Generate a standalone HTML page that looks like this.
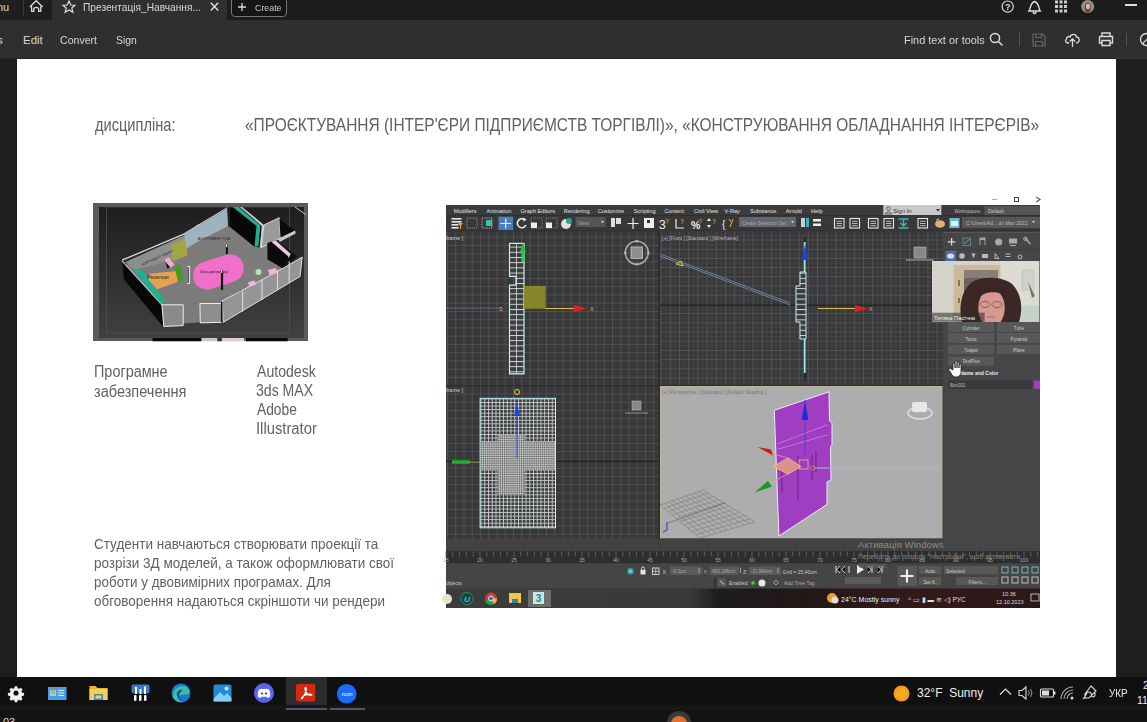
<!DOCTYPE html>
<html><head><meta charset="utf-8">
<style>
*{margin:0;padding:0;box-sizing:border-box}
html,body{width:1147px;height:722px;overflow:hidden;background:#1e1e1e;font-family:"Liberation Sans",sans-serif}
.a{position:absolute}
.t{position:absolute;color:#616161;white-space:nowrap;transform-origin:0 0}
.ct{position:absolute;color:#d6d6d6;white-space:nowrap;font-size:11.5px;line-height:12px}
svg{position:absolute;overflow:visible}

</style></head><body>
<div class="a" style="left:0;top:0;width:1147px;height:20px;background:#1c1c1c"></div>
<div class="a" style="left:0;top:0;width:52px;height:20px;background:#1f1f1f"></div>
<div class="a" style="left:22.5px;top:0;width:1px;height:16px;background:#383838"></div>
<div class="a" style="left:52px;top:0;width:175px;height:20px;background:#2f2f2f"></div>
<div class="a" style="left:0;top:20px;width:1147px;height:39px;background:#2f2f2f"></div><div class="a" style="left:0;top:58px;width:1116px;height:1px;background:#262626"></div><div class="a" style="left:1116px;top:58px;width:31px;height:1px;background:#3a3a3a"></div>
<div class="a" style="left:17px;top:59px;width:1099px;height:618px;background:#fff"></div>
<div class="ct" style="left:-3px;top:0.5px;font-size:11px">nu</div>
<svg style="left:29px;top:0" width="15" height="14" viewBox="0 0 15 14"><path d="M1.3 6.5 L7.2 0.8 L13.1 6.5 L11.8 6.8 V11.3 H9.6 V8.4 Q7.2 6.3 4.8 8.4 V11.3 H2.6 V6.8 Z" fill="none" stroke="#ddd" stroke-width="1.3" stroke-linejoin="round"/></svg>
<svg style="left:62px;top:0" width="14" height="14" viewBox="0 0 14 14"><path d="M7 1 L8.8 5 L13 5.3 L9.8 8 L10.8 12.3 L7 10 L3.2 12.3 L4.2 8 L1 5.3 L5.2 5 Z" fill="none" stroke="#ddd" stroke-width="1.2"/></svg>
<div class="ct" style="left:83px;top:1px;font-size:11.5px;transform:scaleX(0.885);transform-origin:0 0">Презентація_Навчання...</div>
<svg style="left:209px;top:2px" width="11" height="11" viewBox="0 0 11 11"><path d="M1.8 0.8 L9.2 8.5 M9.2 0.8 L1.8 8.5" stroke="#ddd" stroke-width="1.5"/></svg>
<div class="a" style="left:231px;top:-3px;width:56px;height:20px;border:1px solid #777;border-radius:4px;background:#151515"></div>
<svg style="left:237px;top:2px" width="10" height="10" viewBox="0 0 10 10"><path d="M5 1 V9 M1 5 H9" stroke="#ddd" stroke-width="1.3"/></svg>
<div class="ct" style="left:255px;top:2px;font-size:9.5px;color:#ccc;transform:scaleX(0.93);transform-origin:0 0">Create</div>
<svg style="left:1001px;top:0" width="14" height="14" viewBox="0 0 14 14"><circle cx="6.7" cy="6.6" r="5.6" fill="none" stroke="#ddd" stroke-width="1.2"/><text x="6.7" y="9.8" font-size="9" font-family="Liberation Sans" font-weight="bold" fill="#ddd" text-anchor="middle">?</text></svg>
<svg style="left:1027px;top:0" width="16" height="15" viewBox="0 0 16 15"><path d="M2 11 C3.5 9 3 3 7.6 1.5 C12.2 3 11.7 9 13.2 11 Z M6 12 C6.5 14 8.7 14 9.2 12" fill="none" stroke="#e0e0e0" stroke-width="1.4"/></svg>
<svg style="left:1055px;top:0" width="14" height="14" viewBox="0 0 14 14"><g fill="#ccc"><rect x="0" y="0.5" width="3" height="3"/><rect x="4.5" y="0.5" width="3" height="3"/><rect x="9" y="0.5" width="3" height="3"/><rect x="0" y="5" width="3" height="3"/><rect x="4.5" y="5" width="3" height="3"/><rect x="9" y="5" width="3" height="3"/><rect x="0" y="9.5" width="3" height="3"/><rect x="4.5" y="9.5" width="3" height="3"/><rect x="9" y="9.5" width="3" height="3"/></g></svg>
<svg style="left:1080px;top:0" width="16" height="14" viewBox="0 0 16 14"><circle cx="7.7" cy="6.5" r="6.5" fill="#9a8c86"/><ellipse cx="7.7" cy="7.5" rx="3" ry="5" fill="#5a3a30"/><ellipse cx="7.9" cy="6.5" rx="2" ry="3" fill="#d8b8a8"/></svg>
<div class="a" style="left:1125px;top:4px;width:12px;height:2px;background:#ddd"></div>
<div class="ct" style="left:-3px;top:34px">s</div>
<div class="ct" style="left:23px;top:34px">Edit</div>
<div class="ct" style="left:60px;top:34px;transform:scaleX(0.92);transform-origin:0 0">Convert</div>
<div class="ct" style="left:116px;top:34px;transform:scaleX(0.9);transform-origin:0 0">Sign</div>
<div class="ct" style="left:904px;top:34px;transform:scaleX(0.95);transform-origin:0 0">Find text or tools</div>
<svg style="left:989px;top:32px" width="15" height="15" viewBox="0 0 15 15"><circle cx="6" cy="6" r="4.6" fill="none" stroke="#ddd" stroke-width="1.5"/><path d="M9.5 9.5 L13.5 13.5" stroke="#ddd" stroke-width="1.6"/></svg>
<div class="a" style="left:1019px;top:33px;width:1px;height:13px;background:#555"></div>
<svg style="left:1032px;top:33px" width="14" height="14" viewBox="0 0 14 14"><path d="M1 1 H10.5 L13 3.5 V13 H1 Z M4 1 V4.5 H9.5 V1 M3.5 13 V8.5 H10.5 V13" fill="none" stroke="#666" stroke-width="1.2"/></svg>
<svg style="left:1064px;top:31px" width="17" height="17" viewBox="0 0 17 17"><path d="M5 12 H4 C1.5 12 1 9.5 2.5 8 C2.5 5.5 5 5 6 6 C7 2.5 12 2.5 12.5 6 C15 6 16 9 14.5 11 C14 12 13 12 12 12" fill="none" stroke="#ddd" stroke-width="1.3"/><path d="M8.5 16 V8 M5.8 10.5 L8.5 7.8 L11.2 10.5" fill="none" stroke="#ddd" stroke-width="1.3"/></svg>
<svg style="left:1098px;top:32px" width="16" height="15" viewBox="0 0 16 15"><path d="M4 4.5 V1 H12 V4.5 M1.5 4.5 H14.5 V11 H12 M4 11 H1.5 V4.5 M4 8.5 H12 V13.5 H4 Z" fill="none" stroke="#ddd" stroke-width="1.4"/></svg>
<div class="a" style="left:1126px;top:33px;width:1px;height:13px;background:#555"></div>
<svg style="left:1139px;top:32px" width="14" height="15" viewBox="0 0 14 15"><circle cx="7.5" cy="7.5" r="6" fill="none" stroke="#ddd" stroke-width="1.3"/><path d="M4 12 C5 8 9 9 9 5" fill="none" stroke="#ddd" stroke-width="1.2"/></svg>

<div class="t" style="left:94.6px;top:117.39px;font-size:17.5px;line-height:17.5px;transform:scaleX(0.8347)">дисципліна:</div>
<div class="t" style="left:244.82px;top:117.09px;font-size:17.5px;line-height:17.5px;transform:scaleX(0.8833)">«ПРОЄКТУВАННЯ (ІНТЕР'ЄРИ ПІДПРИЄМСТВ ТОРГІВЛІ)», «КОНСТРУЮВАННЯ ОБЛАДНАННЯ ІНТЕРЄРІВ»</div>
<div class="t" style="left:94.09px;top:363.93px;font-size:15.8px;line-height:15.8px;transform:scaleX(0.9127)">Програмне</div>
<div class="t" style="left:94.08px;top:384.13px;font-size:15.8px;line-height:15.8px;transform:scaleX(0.9204)">забезпечення</div>
<div class="t" style="left:256.9px;top:363.96px;font-size:16px;line-height:16px;transform:scaleX(0.8806)">Autodesk</div>
<div class="t" style="left:256.02px;top:383.15999999999997px;font-size:16px;line-height:16px;transform:scaleX(0.8797)">3ds MAX</div>
<div class="t" style="left:256.9px;top:401.96px;font-size:16px;line-height:16px;transform:scaleX(0.8609)">Adobe</div>
<div class="t" style="left:255.98px;top:420.86px;font-size:16px;line-height:16px;transform:scaleX(0.9246)">Illustrator</div>
<div class="t" style="left:93.77px;top:536.64px;font-size:14.6px;line-height:14.6px;transform:scaleX(0.9265)">Студенти навчаються створювати проекції та</div>
<div class="t" style="left:93.77px;top:555.64px;font-size:14.6px;line-height:14.6px;transform:scaleX(0.9251)">розрізи 3Д моделей, а також оформлювати свої</div>
<div class="t" style="left:93.78px;top:574.64px;font-size:14.6px;line-height:14.6px;transform:scaleX(0.9204)">роботи у двовимірних програмах. Для</div>
<div class="t" style="left:93.78px;top:594.14px;font-size:14.6px;line-height:14.6px;transform:scaleX(0.9236)">обговорення надаються скріншоти чи рендери</div>

<svg style="left:93px;top:203px" width="215" height="138" viewBox="0 0 215 138"><defs><linearGradient id="sg" x1="0" x2="0" y1="0" y2="1"><stop offset="0" stop-color="#1e1e1e"/><stop offset="1" stop-color="#404040"/></linearGradient></defs><rect x="0" y="0" width="215" height="138" fill="#5b5b5b"/><rect x="6" y="4" width="205" height="131" fill="url(#sg)"/><rect x="13.4" y="4" width="183.2" height="125.7" fill="none" stroke="#505050" stroke-width="0.8"/><rect x="59.5" y="135" width="49" height="3.3" fill="#0a0a0a"/><rect x="108.5" y="135" width="16" height="3.3" fill="#c8c8c8"/><rect x="124.5" y="135" width="4" height="3.3" fill="#333"/><rect x="129" y="135" width="22" height="3.3" fill="#e8c8d8"/><rect x="153" y="135" width="41.7" height="3.3" fill="#0a0a0a"/><polygon points="33.0,62.1 91.2,33.0 105.0,21.3 135.1,23.3 161.3,43.6 174.8,38.8 196.2,54.3 129.2,98.9 69.8,102.8" fill="#7c7c7c"/><polygon points="69.8,102.8 91.2,100.9 130.2,98.0 130.2,118.3 107.3,119.3 69.8,122.2" fill="#7c7c7c"/><polygon points="134.1,23.3 174.8,38.8 196.2,54.3 129.2,98.9" fill="#7c7c7c"/><polygon points="29.1,57.2 69.8,102.8 69.8,123.2 31.0,76.6" fill="#080808"/><polygon points="32.0,59.2 92.1,32.0 93.1,53.3 41.7,66.9" fill="#8e8e8e"/><polyline points="29.1,57.2 92.1,30.6" stroke="#ddd" stroke-width="1.3" fill="none"/><polyline points="29.1,57.8 69.8,102.8" stroke="#ccc" stroke-width="1.2" fill="none"/><polygon points="77.6,41.7 93.5,35.5 94.3,52.4 79.5,58.2" fill="#a3a545"/><polygon points="91.2,31.0 134.1,5.4 135.1,22.9 105.0,38.4 93.1,45.6" fill="#9fb3bf"/><polyline points="91.2,30.6 134.1,4.8" stroke="#ddd" stroke-width="1" fill="none"/><polygon points="41.1,67.5 46.6,65.0 72.2,97.0 68.3,101.3" fill="#1fb08f"/><polygon points="56.3,70.8 83.4,67.9 85.7,78.6 64.0,86.3 55.3,76.6" fill="#e6a154"/><polygon points="81.5,62.5 88.8,61.7 89.6,77.6 85.0,79.1" fill="#3e9e22"/><polygon points="71.8,56.3 76.0,54.3 81.5,61.7 77.2,65.0 73.3,64.0" fill="#f2a8d6"/><polygon points="72.2,58.2 77.2,64.4 74.1,65.6" fill="#111"/><text x="54.3" y="75.7" font-size="5.2" font-family="Liberation Sans" fill="#222">Ресепшн</text><text transform="translate(48.5,63.0) rotate(-24)" font-size="3.2" font-family="Liberation Sans" fill="#222">АСОРТИМЕНТ ТОВАРУ</text><text x="105.0" y="36.9" font-size="3.4" font-family="Liberation Sans" fill="#222">АСОРТИМЕНТ ТОВАРУ</text><polygon points="68.9,101.8 90.2,101.8 90.2,122.6 70.8,123.4" fill="#8a8a8a" stroke="#eee" stroke-width="1"/><polygon points="137.0,24.1 161.1,43.6 174.6,56.6 190.6,66.0 151.5,87.0 137.0,87.0" fill="#7c7c7c"/><polygon points="137.0,24.1 137.0,4.8 145.4,3.9 168.6,22.7 166.5,44.6 161.1,43.6" fill="#080808"/><polygon points="139.7,3.9 145.7,3.9 167.4,22.4 165.4,43.6 161.5,43.6 163.5,22.9" fill="#1fb08f"/><polygon points="146.9,3.9 149.0,3.9 171.0,21.9 168.1,44.8 166.9,44.6 168.8,22.9" fill="#cfcfcf"/><polygon points="168.3,44.6 171.0,21.9 186.2,14.7 187.6,34.9 184.6,36.4" fill="#9a9a9a" stroke="#e0e0e0" stroke-width="0.9"/><polygon points="186.4,15.9 202.1,28.0 196.6,30.4 187.6,35.2" fill="#0a0a0a"/><polygon points="184.6,36.1 202.1,27.5 202.7,30.4 187.0,38.8" fill="#c8c8c8"/><polygon points="174.3,40.0 182.8,37.3 197.8,50.8 190.0,65.3 174.6,56.6" fill="#0a0a0a"/><polygon points="178.6,38.8 182.5,37.3 198.2,51.1 196.3,55.7 194.8,53.0 179.8,40.0" fill="#f2c4de"/><polygon points="182.8,37.3 204.5,53.0 190.0,65.7 197.8,50.8" fill="#111"/><polygon points="202.1,3.6 212.9,12.0" fill="none"/><polygon points="190.0,65.4 209.2,54.1 207.0,73.5 130.2,119.3 129.2,98.0" fill="#959595" stroke="#e0e0e0" stroke-width="1"/><polyline points="149.6,88.3 149.6,108.6" stroke="#e8e8e8" stroke-width="0.9"/><polyline points="169.0,76.6 169.0,97.0" stroke="#e8e8e8" stroke-width="0.9"/><polyline points="184.5,66.9 184.5,86.3" stroke="#e8e8e8" stroke-width="0.9"/><polyline points="196.2,58.2 196.2,79.5" stroke="#e8e8e8" stroke-width="0.9"/><polygon points="106.9,100.5 128.3,100.5 128.7,119.3 107.3,119.9" fill="#8e8e8e" stroke="#eee" stroke-width="1"/><polyline points="128.7,98.9 128.7,119.3" stroke="#111" stroke-width="1.5"/><g transform="translate(125.4,68.9) rotate(-18)"><rect x="-26" y="-14" width="52" height="28" rx="14" fill="#f06fc8"/></g><text x="106.9" y="70.2" font-size="3.6" font-family="Liberation Sans" fill="#222">Зона дистрибуції</text><rect x="132.9" y="41.1" width="2" height="10" fill="#111"/><rect x="133.1" y="41.1" width="1.2" height="3" fill="#eee"/><rect x="127.9" y="66.9" width="2.2" height="20" fill="#111"/><rect x="128.1" y="66.9" width="1.2" height="3" fill="#eee"/><rect x="94.1" y="63.0" width="3" height="18" fill="#ddd"/><rect x="94.5" y="64.0" width="1.2" height="16" fill="#222"/><circle cx="165.5" cy="68.9" r="3" fill="#b8e0b0"/><polygon points="174.8,66.9 182.6,65.0 184.5,69.8 176.8,72.2" fill="#f0b8d8"/><polygon points="155.0,79.5 161.3,77.2 163.2,81.5 156.4,83.8" fill="#f0b8d8"/><polyline points="202.0,3.9 212.7,11.6" stroke="#ccc" stroke-width="1"/></svg>
<svg style="left:446px;top:205px" width="594" height="403" viewBox="0 0 594 403"><defs><pattern id="g1" x="1" y="7" width="8.25" height="8.25" patternUnits="userSpaceOnUse"><rect width="8.25" height="8.25" fill="#38383a"/><path d="M0 0.5 H8.25 M0.5 0 V8.25" stroke="#4f4f51" stroke-width="1"/></pattern><pattern id="g2" x="3" y="7" width="9.2" height="9.2" patternUnits="userSpaceOnUse"><rect width="9.2" height="9.2" fill="#38383a"/><path d="M0 0.5 H9.2 M0.5 0 V9.2" stroke="#555557" stroke-width="1"/><path d="M0 5.1 H9.2 M5.1 0 V9.2" stroke="#434345" stroke-width="0.9"/></pattern><pattern id="wf" x="34.5" y="193.5" width="3.75" height="3.55" patternUnits="userSpaceOnUse"><rect width="3.75" height="3.55" fill="#3a3b3d"/><path d="M0 0.5 H3.75 M0.5 0 V3.55" stroke="#cfd2d2" stroke-width="0.85"/></pattern><pattern id="wf2" x="0" y="0" width="5" height="5.2" patternUnits="userSpaceOnUse"><rect width="5" height="5.2" fill="#3b3d3e"/><path d="M0 0.5 H5" stroke="#e0e4e4" stroke-width="0.9"/></pattern><linearGradient id="tbg" x1="0" x2="1" y1="0" y2="0"><stop offset="0" stop-color="#3c3c3c"/><stop offset="0.41" stop-color="#3a3a3a"/><stop offset="0.46" stop-color="#1e1c1c"/><stop offset="0.6" stop-color="#221818"/><stop offset="0.8" stop-color="#331a18"/><stop offset="1" stop-color="#2a1818"/></linearGradient><linearGradient id="cam" x1="0" x2="1" y1="0" y2="0"><stop offset="0" stop-color="#d9d4c8"/><stop offset="0.6" stop-color="#cfc8b8"/><stop offset="1" stop-color="#c4c8c4"/></linearGradient><pattern id="wfd" x="0" y="0" width="1.9" height="1.8" patternUnits="userSpaceOnUse"><rect width="1.9" height="1.8" fill="#505254"/><path d="M0 0.4 H1.9 M0.4 0 V1.8" stroke="#d0d2d2" stroke-width="0.7"/></pattern><filter id="camblur" x="-5%" y="-5%" width="110%" height="110%"><feGaussianBlur stdDeviation="0.7"/></filter><clipPath id="camclip"><rect x="486" y="56" width="107.5" height="61"/></clipPath></defs><rect x="0" y="0" width="594" height="403" fill="#444"/><rect x="0" y="0" width="594" height="10.5" fill="#3b3b3b"/><text x="7.8" y="8" font-size="5.6" font-family="Liberation Sans" fill="#e4e4e4">Modifiers</text><text x="40.5" y="8" font-size="5.6" font-family="Liberation Sans" fill="#e4e4e4">Animation</text><text x="74.5" y="8" font-size="5.6" font-family="Liberation Sans" fill="#e4e4e4">Graph Editors</text><text x="117.7" y="8" font-size="5.6" font-family="Liberation Sans" fill="#e4e4e4">Rendering</text><text x="151.7" y="8" font-size="5.6" font-family="Liberation Sans" fill="#e4e4e4">Customize</text><text x="187.8" y="8" font-size="5.6" font-family="Liberation Sans" fill="#e4e4e4">Scripting</text><text x="218.4" y="8" font-size="5.6" font-family="Liberation Sans" fill="#e4e4e4">Content</text><text x="248.0" y="8" font-size="5.6" font-family="Liberation Sans" fill="#e4e4e4">Civil View</text><text x="278.6" y="8" font-size="5.6" font-family="Liberation Sans" fill="#e4e4e4">V-Ray</text><text x="304.0" y="8" font-size="5.6" font-family="Liberation Sans" fill="#e4e4e4">Substance</text><text x="339.8" y="8" font-size="5.6" font-family="Liberation Sans" fill="#e4e4e4">Arnold</text><text x="365.0" y="8" font-size="5.6" font-family="Liberation Sans" fill="#e4e4e4">Help</text><rect x="437.3" y="0" width="58" height="10.5" fill="#c9c9c9"/><circle cx="442.5" cy="3.5" r="1.8" fill="none" stroke="#444" stroke-width="0.8"/><path d="M439 9 q3.5 -4.5 7 0z" fill="none" stroke="#444" stroke-width="0.8"/><text x="447" y="8" font-size="6" font-family="Liberation Sans" fill="#333">Sign In</text><path d="M490 4 h4 l-2 2.5z" fill="#333"/><text x="508.5" y="7.5" font-size="4.6" font-family="Liberation Sans" fill="#bbb">Workspaces:</text><rect x="538.6" y="1" width="55.4" height="9" fill="#555"/><text x="542.0" y="7.5" font-size="5" font-family="Liberation Sans" fill="#ccc">Default</text><rect x="0" y="10.5" width="594" height="15.5" fill="#383838"/><rect x="0" y="10" width="594" height="0.8" fill="#2e2e2e"/><rect x="0" y="25.5" width="594" height="1" fill="#2a2a2a"/><g fill="#e8e8e8"><rect x="5.5" y="13" width="10" height="1.6"/><rect x="5.5" y="16" width="10" height="1.6"/><rect x="5.5" y="19" width="7" height="1.6"/><rect x="5.5" y="22" width="7" height="1.6"/></g><path d="M12 18 h5 l-2 3 v3 h-1 v-3z" fill="#f0a020"/><rect x="21" y="13" width="10" height="10" fill="none" stroke="#9aa" stroke-width="0.8" stroke-dasharray="1.2 1"/><rect x="36" y="13" width="10" height="10" fill="none" stroke="#ccc" stroke-width="0.8" stroke-dasharray="1.2 1"/><rect x="40" y="15" width="6" height="6" fill="#3cc0b0"/><rect x="52.4" y="11.7" width="14.7" height="13.4" fill="#4c7cc4"/><path d="M59.69999999999999 13.5 V23.5 M54.5 18.5 H65" stroke="#eef" stroke-width="1.2"/><path d="M79 15 A4.5 4.5 0 1 0 80 20" fill="none" stroke="#eee" stroke-width="1.6"/><path d="M77 12.5 l3.5 2 -3 2z" fill="#eee"/><rect x="85" y="13" width="11" height="10" fill="none" stroke="#aaa" stroke-width="0.7" stroke-dasharray="1 1"/><rect x="85" y="17.5" width="6" height="5.5" fill="#eee"/><rect x="100" y="13" width="11" height="10" fill="none" stroke="#aaa" stroke-width="0.7" stroke-dasharray="1 1"/><rect x="100" y="17.5" width="6" height="5.5" fill="#eee"/><circle cx="120" cy="19" r="5" fill="#e8e0dc"/><circle cx="123" cy="16" r="3" fill="#2ea090"/><rect x="129.6" y="12" width="30" height="10" fill="#555"/><text x="132" y="19.5" font-size="5" font-family="Liberation Sans" fill="#aaa">View</text><path d="M155 16 h3 l-1.5 2z" fill="#ddd"/><rect x="165" y="13" width="4" height="9" fill="#ddd"/><rect x="170" y="13" width="5" height="6" fill="#ddd"/><path d="M187 13 V24 M181.5 18.5 H192.5" stroke="#eee" stroke-width="1.2"/><rect x="198" y="13" width="10" height="10" fill="#eee"/><rect x="201" y="15" width="3" height="3" fill="#333"/><text x="213" y="24" font-size="12" font-family="Liberation Sans" fill="#eee">3</text><text x="219" y="19" font-size="7" font-family="Liberation Sans" fill="#f0b030">?</text><path d="M230 14 V23 H238" stroke="#eee" stroke-width="1.2" fill="none"/><text x="234" y="19" font-size="7" font-family="Liberation Sans" fill="#f0b030">?</text><text x="245" y="23.5" font-size="10.5" font-family="Liberation Sans" font-weight="bold" fill="#eee">%</text><text x="252" y="19" font-size="7" font-family="Liberation Sans" fill="#f0b030">?</text><path d="M261 16 l2 -3 2 3z M261 20 l2 3 2 -3z" fill="#eee"/><text x="266" y="19" font-size="7" font-family="Liberation Sans" fill="#f0b030">?</text><text x="276" y="23" font-size="10" font-family="Liberation Sans" fill="#eee">{</text><path d="M283 14 l2 3 M287 14 l-3 8" stroke="#f0b030" stroke-width="1"/><rect x="293" y="12" width="57" height="10" fill="#62666e"/><text x="296" y="19.5" font-size="4.8" font-family="Liberation Sans" fill="#aaa">Create Selection Set</text><path d="M345 16 h3 l-1.5 2z" fill="#ddd"/><rect x="355" y="13" width="4" height="9" fill="#ccc"/><rect x="360" y="13" width="3" height="9" fill="#3cb0c0"/><rect x="367" y="14" width="8" height="2.5" fill="#eee"/><rect x="367" y="18.5" width="8" height="2.5" fill="#eee"/><rect x="388.5" y="13.5" width="9.5" height="9.5" fill="none" stroke="#e8e8e8" stroke-width="1.1"/><path d="M390.5 16.3 h5.5 M390.5 18.5 h5.5 M390.5 20.7 h5.5" stroke="#ddd" stroke-width="0.8"/><rect x="404" y="13.5" width="9.5" height="9.5" fill="none" stroke="#e8e8e8" stroke-width="1.1"/><path d="M406 16.3 h5.5 M406 18.5 h5.5 M406 20.7 h5.5" stroke="#ddd" stroke-width="0.8"/><rect x="422.5" y="13.5" width="9.5" height="9.5" fill="none" stroke="#e8e8e8" stroke-width="1.1"/><path d="M424.5 16.3 h5.5 M424.5 18.5 h5.5 M424.5 20.7 h5.5" stroke="#ddd" stroke-width="0.8"/><rect x="438" y="13.5" width="9.5" height="9.5" fill="none" stroke="#e8e8e8" stroke-width="1.1"/><path d="M440 16.3 h5.5 M440 18.5 h5.5 M440 20.7 h5.5" stroke="#ddd" stroke-width="0.8"/><rect x="472" y="13.5" width="9.5" height="9.5" fill="none" stroke="#e8e8e8" stroke-width="1.1"/><path d="M474 16.3 h5.5 M474 18.5 h5.5 M474 20.7 h5.5" stroke="#ddd" stroke-width="0.8"/><rect x="452.5" y="13" width="10" height="10" fill="#3e3e3e"/><path d="M452.5 14 h10 M457.5 15 v5 M454.5 18 l3 3 3 -3 M452.5 23 h10" stroke="#30c0b0" stroke-width="1.4" fill="none"/><ellipse cx="494" cy="19" rx="5" ry="3.8" fill="#e0b070"/><path d="M490 15.5 l3 -2" stroke="#ddd" stroke-width="1"/><rect x="503.5" y="13" width="10" height="10" fill="#70b8d0"/><rect x="505" y="16" width="7" height="5" fill="#e0f0f8"/><rect x="516" y="12" width="78" height="11" fill="#575757"/><text x="520" y="19.5" font-size="5" font-family="Liberation Sans" fill="#bbb">C:\Users\Ad... dn Max 2022</text><path d="M586 16 h3 l-1.5 2z" fill="#ddd"/><rect x="0" y="26.5" width="497" height="307" fill="#2c2c2c"/><rect x="0" y="26.5" width="212.5" height="153.5" fill="url(#g1)"/><rect x="214" y="26.5" width="283" height="153.5" fill="url(#g2)"/><rect x="0" y="181.5" width="212.5" height="152" fill="url(#g1)"/><rect x="214" y="181" width="282.5" height="152.5" fill="#c4b89a"/><rect x="214.8" y="181.8" width="281" height="151" fill="#adadad"/><text x="0" y="35" font-size="5.5" font-family="Liberation Sans" fill="#ccc">frame ]</text><path d="M0 103 H56" stroke="#6d7890" stroke-width="0.8"/><path d="M77 35 V172" stroke="#222" stroke-width="0.8"/><polygon points="63.5,38.3 78.0,38.3 78.0,168.9 63.5,168.9 63.5,80.2 70.0,80.2 70.0,71.3 63.5,71.3" fill="url(#wf2)" stroke="#bff4f4" stroke-width="1.2"/><path d="M70.5 38 V169" stroke="#ddd" stroke-width="0.8"/><rect x="78" y="80.9" width="21.6" height="22.9" fill="#8c8a2a" opacity="0.95"/><path d="M77 57 V41" stroke="#2ad040" stroke-width="3"/><path d="M74 47 l3 -9 3 9z" fill="#20c040"/><path d="M99 103.5 H128" stroke="#d8c040" stroke-width="1"/><path d="M128 100 l13 3.5 -13 3.5z" fill="#e02020"/><text x="144" y="106" font-size="5.5" font-family="Liberation Sans" fill="#d8c040">X</text><text x="53" y="106" font-size="5" font-family="Liberation Sans" fill="#c8b040">Ω</text><circle cx="190.8" cy="47.7" r="11.5" fill="none" stroke="#a8a8a8" stroke-width="1.6"/><g fill="#bbb"><circle cx="190.8" cy="36.2" r="1.3"/><circle cx="190.8" cy="59.2" r="1.3"/><circle cx="179.3" cy="47.7" r="1.3"/><circle cx="202.3" cy="47.7" r="1.3"/></g><rect x="185" y="42" width="11.5" height="11.5" fill="#8e8e8e" stroke="#c8c8c8" stroke-width="0.8"/><text x="216" y="35" font-size="5" font-family="Liberation Sans" fill="#bbb">[+] [Front ] [Standard ] [Wireframe]</text><path d="M214 100 H497" stroke="#111" stroke-width="1.2"/><path d="M214 51 L344 100 M214 49 L344 98" stroke="#7a94b8" stroke-width="0.8"/><path d="M230 59 l5 -3 l2 5z" fill="none" stroke="#d8d040" stroke-width="1"/><path d="M359 33 V175" stroke="#111" stroke-width="1"/><path d="M358.70000000000005 37 V168" stroke="#9ee8f0" stroke-width="1.8"/><path d="M356 55 l3 -16 3 16z" fill="#2040e0"/><polygon points="354.0,67.0 360.0,67.0 360.0,134.0 354.0,134.0 354.0,117.0 350.0,117.0 350.0,81.0 354.0,81.0" fill="url(#wf2)" stroke="#bff0f0" stroke-width="1"/><path d="M372 103.5 H409" stroke="#d8c040" stroke-width="1"/><path d="M409 100 l13 3.5 -13 3.5z" fill="#e02020"/><text x="423" y="106" font-size="5" font-family="Liberation Sans" fill="#d8c040">X</text><path d="M362 80 H382 V100" fill="none" stroke="#6a3a5a" stroke-width="0.8"/><rect x="468" y="42" width="12" height="11" fill="#888" stroke="#bbb" stroke-width="0.6"/><path d="M460 55 H488" stroke="#aaa" stroke-width="1"/><text x="0" y="187" font-size="5.5" font-family="Liberation Sans" fill="#ccc">frame ]</text><path d="M0 256 H212" stroke="#151515" stroke-width="1.2"/><rect x="34.1" y="193.3" width="75.4" height="129.5" fill="url(#wf)" stroke="#b8f0f0" stroke-width="1"/><rect x="34.5" y="236" width="74.5" height="29.5" fill="url(#wfd)"/><rect x="51.60000000000002" y="229.60000000000002" width="27" height="60.4" fill="url(#wfd)"/><path d="M71 197 V253" stroke="#3050e0" stroke-width="1"/><path d="M68 211 l3 -13 3 13z" fill="#2040e0"/><circle cx="71" cy="187" r="2.5" fill="none" stroke="#e8d840" stroke-width="1"/><path d="M6 257 H24" stroke="#20b030" stroke-width="3.5"/><path d="M24 257 H34" stroke="#d8c040" stroke-width="0.8"/><rect x="186" y="196" width="9" height="9" fill="#888" stroke="#aaa" stroke-width="0.6"/><path d="M179 208 H202" stroke="#aaa" stroke-width="0.8"/><text x="216" y="189" font-size="5" font-family="Liberation Sans" fill="#777">[+] [Perspective ] [Standard ] [Default Shading ]</text><g stroke="#8e8e8e" stroke-width="0.6" fill="none"></g><path d="M214.0 300.0 L254.0 333.0 M214.0 300.0 L257.0 285.0 M218.3 298.5 L259.5 331.4 M218.0 303.3 L262.2 288.2 M222.6 297.0 L265.0 329.8 M222.0 306.6 L267.4 291.4 M226.9 295.5 L270.5 328.2 M226.0 309.9 L272.6 294.6 M231.2 294.0 L276.0 326.6 M230.0 313.2 L277.8 297.8 M235.5 292.5 L281.5 325.0 M234.0 316.5 L283.0 301.0 M239.8 291.0 L287.0 323.4 M238.0 319.8 L288.2 304.2 M244.1 289.5 L292.5 321.8 M242.0 323.1 L293.4 307.4 M248.4 288.0 L298.0 320.2 M246.0 326.4 L298.6 310.6 M252.7 286.5 L303.5 318.6 M250.0 329.7 L303.8 313.8 M257.0 285.0 L309.0 317.0 M254.0 333.0 L309.0 317.0" stroke="#7c7c7c" stroke-width="0.6" fill="none"/><path d="M222 318 L279 298" stroke="#666" stroke-width="0.7"/><path d="M221 325 v-8 M221 325 l-4 2" stroke="#30a" stroke-width="0.8"/><polygon points="328.3,205.3 383.0,186.8 383.5,216.0 386.0,218.0 386.0,240.0 384.5,242.0 385.0,275.0 381.0,277.0 381.0,299.4 332.9,331.0" fill="#a03ec2" stroke="#f0e8ff" stroke-width="1"/><path d="M331.2,239.0 L381.6,219.7 M331.2,244.4 L381.6,229.8" stroke="#c47ee0" stroke-width="0.9" fill="none"/><path d="M336 265 v22 M352 250 v45 M366 250 v25 M370 247 v20" stroke="#7a2a98" stroke-width="1.5"/><path d="M359 195 V250" stroke="#3040d0" stroke-width="0.8"/><path d="M355.5 215 l3.5 -18 3.5 18z" fill="#1830d8"/><path d="M325.8,248.7 L341.9,253.0 M324.8,277.6 L341.9,269.1" stroke="#f0a080" stroke-width="0.8"/><polygon points="311.5,242.0 325.0,244.5 327.0,250.5" fill="#c81c14"/><polygon points="308.5,287.5 322.0,276.0 326.0,281.5" fill="#1a9a22"/><polygon points="327.0,261.6 342.0,253.0 355.0,261.6 342.0,269.0" fill="#e8a080" fill-opacity="0.85" stroke="#f8c090" stroke-width="0.8"/><rect x="353" y="255" width="9" height="9" fill="none" stroke="#f0b0a0" stroke-width="0.8"/><circle cx="367" cy="263" r="2.2" fill="none" stroke="#f08070" stroke-width="0.8"/><path d="M369 263 H494" stroke="#a8b8c8" stroke-width="1"/><g><ellipse cx="474" cy="208" rx="12" ry="6" fill="none" stroke="#ddd" stroke-width="1.5"/><rect x="466" y="197" width="15" height="10" rx="2" fill="#e8e8e8"/></g><rect x="497" y="26.5" width="97" height="320" fill="#464548"/><rect x="497" y="27" width="97" height="0.8" fill="#5a5a5a"/><path d="M505.6 33 v7.5 M501.79999999999995 36.80000000000001 h7.5" stroke="#ddd" stroke-width="1.3"/><rect x="517" y="33" width="7.5" height="7.5" fill="none" stroke="#5a8a88" stroke-width="1"/><path d="M518.5 39 l5 -5" stroke="#8ab" stroke-width="1"/><rect x="533.5" y="32.5" width="6" height="2.5" fill="#9aa"/><path d="M534 35 v5 M539 35 v5" stroke="#8a9a9a" stroke-width="1.2"/><circle cx="552.7" cy="37" r="3.6" fill="#aaa"/><rect x="563" y="33.5" width="8" height="5" fill="#aaa"/><path d="M564 40.5 h6" stroke="#aaa" stroke-width="1"/><path d="M579 33 l5.5 6" stroke="#aaa" stroke-width="1.4"/><circle cx="579.5" cy="33.80000000000001" r="1.8" fill="none" stroke="#aaa" stroke-width="1"/><rect x="497" y="44" width="97" height="0.8" fill="#3c3c3c"/><rect x="499.29999999999995" y="45.69999999999999" width="10.7" height="10.3" rx="1" fill="#4a6ea8"/><ellipse cx="504.6" cy="51" rx="3.5" ry="2.6" fill="#dde"/><circle cx="516" cy="51" r="2.8" fill="#bbb"/><path d="M525.5 48.5 h4 l-2 5z" fill="#bbb"/><rect x="536" y="49" width="6" height="4" fill="#bbb"/><path d="M549 53.5 l0 -5 l4 5z" fill="none" stroke="#bbb" stroke-width="1"/><path d="M559.5 49 h5 M559.5 51.5 h5" stroke="#bbb" stroke-width="1"/><circle cx="574" cy="52" r="2" fill="none" stroke="#bbb" stroke-width="1"/><rect x="502" y="117" width="46" height="10.0" fill="#585858"/><text x="525" y="124.5" font-size="4.6" font-family="Liberation Sans" fill="#ccc" text-anchor="middle">Cylinder</text><rect x="551" y="117" width="43" height="10.0" fill="#585858"/><text x="573" y="124.5" font-size="4.6" font-family="Liberation Sans" fill="#ccc" text-anchor="middle">Tube</text><rect x="502" y="128" width="46" height="10.0" fill="#585858"/><text x="525" y="135.5" font-size="4.6" font-family="Liberation Sans" fill="#ccc" text-anchor="middle">Torus</text><rect x="551" y="128" width="43" height="10.0" fill="#585858"/><text x="573" y="135.5" font-size="4.6" font-family="Liberation Sans" fill="#ccc" text-anchor="middle">Pyramid</text><rect x="502" y="139.7" width="46" height="9.5" fill="#585858"/><text x="525" y="146.7" font-size="4.6" font-family="Liberation Sans" fill="#ccc" text-anchor="middle">Teapot</text><rect x="551" y="139.7" width="43" height="9.5" fill="#585858"/><text x="573" y="146.7" font-size="4.6" font-family="Liberation Sans" fill="#ccc" text-anchor="middle">Plane</text><rect x="502" y="151.60000000000002" width="46" height="9.1" fill="#585858"/><text x="525" y="158.2" font-size="4.6" font-family="Liberation Sans" fill="#ccc" text-anchor="middle">TextPlus</text><text x="514" y="170" font-size="5" font-family="Liberation Sans" font-weight="bold" fill="#eee">Name and Color</text><rect x="502" y="175.5" width="84" height="8.3" fill="#3a3a3a"/><text x="504" y="182" font-size="4.6" font-family="Liberation Sans" fill="#bbb">Box001</text><rect x="588" y="175.5" width="6" height="8.3" fill="#a040c0"/><path d="M507 165 v-6 a1 1 0 0 1 2 0 v4 v-6 a1 1 0 0 1 2 0 v6 v-5 a1 1 0 0 1 2 0 v5 v-3 a1 1 0 0 1 2 0 v6 c0 4 -2 6 -5 6 c-3 0 -4 -2 -5 -4 l-2 -3 a1 1 0 0 1 2 -1z" fill="#fff" stroke="#111" stroke-width="0.7"/><g clip-path="url(#camclip)"><g filter="url(#camblur)"><rect x="486" y="56" width="107.5" height="61" fill="#d6d4ca"/><rect x="554" y="56" width="39.5" height="61" fill="#dddcd2"/><rect x="507.5" y="60" width="47" height="57" fill="#cbbb9c"/><rect x="518" y="65" width="34" height="52" fill="#6e625e"/><rect x="518" y="65" width="34" height="8" fill="#8a7e78"/><rect x="512" y="75" width="2" height="6" fill="#8a7050"/><rect x="512" y="93" width="2" height="5" fill="#8a7050"/><rect x="576" y="65" width="12" height="20" fill="#cfd2cc" stroke="#b8bcb6" stroke-width="0.6"/><path d="M559 117 q6 -20 34 -16 v16z" fill="#c4d2ca"/><path d="M582 77 l4 16 l3 -2z" fill="#6a7a70"/><path d="M516 117 C512 100 516 85 526 77 C536 71 556 71 566 79 C574 87 578 101 573 117 Z" fill="#3c2525"/><ellipse cx="545.5" cy="103" rx="13.2" ry="19" fill="#d49a90"/><path d="M530 95 C532 81 558 79 561 93 C554 85 538 85 530 95 Z" fill="#3c2525"/><ellipse cx="539" cy="99.5" rx="5" ry="3" fill="none" stroke="#7a5a58" stroke-width="0.9"/><ellipse cx="551" cy="99.5" rx="5" ry="3" fill="none" stroke="#7a5a58" stroke-width="0.9"/><path d="M541 112 h8" stroke="#a06868" stroke-width="1"/></g><rect x="486" y="107.69999999999999" width="52.7" height="9" fill="#2a2a2a" opacity="0.55"/><text x="488" y="115" font-size="5.8" font-family="Liberation Sans" fill="#eee">Тетяна Пасічна</text></g><rect x="0" y="333.5" width="497" height="13" fill="#424242"/><text x="412" y="343.4" font-size="9" font-family="Liberation Sans" fill="#8c8c8c" textLength="85.7" lengthAdjust="spacingAndGlyphs">Активація Windows</text><rect x="0" y="346" width="594" height="12.5" fill="#2e2e2e"/><path d="M0.0 346.5 v6 M6.8 346.5 v5 M13.6 346.5 v5 M20.4 346.5 v5 M27.2 346.5 v5 M34.0 346.5 v6 M40.8 346.5 v5 M47.6 346.5 v5 M54.4 346.5 v5 M61.2 346.5 v5 M68.0 346.5 v6 M74.8 346.5 v5 M81.6 346.5 v5 M88.4 346.5 v5 M95.2 346.5 v5 M102.0 346.5 v6 M108.8 346.5 v5 M115.6 346.5 v5 M122.4 346.5 v5 M129.2 346.5 v5 M136.0 346.5 v6 M142.8 346.5 v5 M149.6 346.5 v5 M156.4 346.5 v5 M163.2 346.5 v5 M170.0 346.5 v6 M176.8 346.5 v5 M183.6 346.5 v5 M190.4 346.5 v5 M197.2 346.5 v5 M204.0 346.5 v6 M210.8 346.5 v5 M217.6 346.5 v5 M224.4 346.5 v5 M231.2 346.5 v5 M238.0 346.5 v6 M244.8 346.5 v5 M251.6 346.5 v5 M258.4 346.5 v5 M265.2 346.5 v5 M272.0 346.5 v6 M278.8 346.5 v5 M285.6 346.5 v5 M292.4 346.5 v5 M299.2 346.5 v5 M306.0 346.5 v6 M312.8 346.5 v5 M319.6 346.5 v5 M326.4 346.5 v5 M333.2 346.5 v5 M340.0 346.5 v6 M346.8 346.5 v5 M353.6 346.5 v5 M360.4 346.5 v5 M367.2 346.5 v5 M374.0 346.5 v6 M380.8 346.5 v5 M387.6 346.5 v5 M394.4 346.5 v5 M401.2 346.5 v5 M408.0 346.5 v6 M414.8 346.5 v5 M421.6 346.5 v5 M428.4 346.5 v5 M435.2 346.5 v5 M442.0 346.5 v6 M448.8 346.5 v5 M455.6 346.5 v5 M462.4 346.5 v5 M469.2 346.5 v5 M476.0 346.5 v6 M482.8 346.5 v5 M489.6 346.5 v5 M496.4 346.5 v5 M503.2 346.5 v5 M510.0 346.5 v6 M516.8 346.5 v5 M523.6 346.5 v5 M530.4 346.5 v5 M537.2 346.5 v5 M544.0 346.5 v6 M550.8 346.5 v5 M557.6 346.5 v5 M564.4 346.5 v5 M571.2 346.5 v5 M578.0 346.5 v6 M584.8 346.5 v5 M591.6 346.5 v5" stroke="#6a6a6a" stroke-width="0.8"/><text x="0.0" y="356.5" font-size="5" font-family="Liberation Sans" fill="#aaa" text-anchor="middle">15</text><text x="34.0" y="356.5" font-size="5" font-family="Liberation Sans" fill="#aaa" text-anchor="middle">20</text><text x="68.0" y="356.5" font-size="5" font-family="Liberation Sans" fill="#aaa" text-anchor="middle">25</text><text x="102.0" y="356.5" font-size="5" font-family="Liberation Sans" fill="#aaa" text-anchor="middle">30</text><text x="136.0" y="356.5" font-size="5" font-family="Liberation Sans" fill="#aaa" text-anchor="middle">35</text><text x="170.0" y="356.5" font-size="5" font-family="Liberation Sans" fill="#aaa" text-anchor="middle">40</text><text x="204.0" y="356.5" font-size="5" font-family="Liberation Sans" fill="#aaa" text-anchor="middle">45</text><text x="238.0" y="356.5" font-size="5" font-family="Liberation Sans" fill="#aaa" text-anchor="middle">50</text><text x="272.0" y="356.5" font-size="5" font-family="Liberation Sans" fill="#aaa" text-anchor="middle">55</text><text x="306.0" y="356.5" font-size="5" font-family="Liberation Sans" fill="#aaa" text-anchor="middle">60</text><text x="340.0" y="356.5" font-size="5" font-family="Liberation Sans" fill="#aaa" text-anchor="middle">65</text><text x="374.0" y="356.5" font-size="5" font-family="Liberation Sans" fill="#aaa" text-anchor="middle">70</text><text x="408.0" y="356.5" font-size="5" font-family="Liberation Sans" fill="#aaa" text-anchor="middle">75</text><text x="442.0" y="356.5" font-size="5" font-family="Liberation Sans" fill="#aaa" text-anchor="middle">80</text><text x="476.0" y="356.5" font-size="5" font-family="Liberation Sans" fill="#aaa" text-anchor="middle">85</text><text x="510.0" y="356.5" font-size="5" font-family="Liberation Sans" fill="#aaa" text-anchor="middle">90</text><text x="544.0" y="356.5" font-size="5" font-family="Liberation Sans" fill="#aaa" text-anchor="middle">95</text><text x="578.0" y="356.5" font-size="5" font-family="Liberation Sans" fill="#aaa" text-anchor="middle">100</text><rect x="0" y="358.5" width="594" height="24.5" fill="#454545"/><text x="0" y="380" font-size="5" font-family="Liberation Sans" fill="#ccc">objects</text><circle cx="184.5" cy="366.29999999999995" r="3.5" fill="#3a8a8a"/><circle cx="184.5" cy="366.29999999999995" r="2" fill="#6cc"/><rect x="194.5" y="365" width="5" height="4.5" fill="#e8e8e8"/><path d="M195.5 365 v-1.5 a1.5 1.5 0 0 1 3 0 v1.5" stroke="#e8e8e8" stroke-width="0.9" fill="none"/><rect x="206.5" y="363" width="6.5" height="6.5" fill="none" stroke="#ddd" stroke-width="0.9"/><path d="M209.75 363 v6.5 M206.5 366.25 h6.5" stroke="#ddd" stroke-width="0.7"/><text x="216.5" y="368.5" font-size="5" font-family="Liberation Sans" fill="#ccc">X:</text><rect x="224" y="361.5" width="32.5" height="8.5" fill="#5a5a5a"/><text x="226" y="368" font-size="4.6" font-family="Liberation Sans" fill="#aaa">-0,3cm</text><path d="M253 363 v5" stroke="#bbb" stroke-width="0.8"/><text x="257.5" y="368.5" font-size="5" font-family="Liberation Sans" fill="#ccc">Y:</text><rect x="263.6" y="361.5" width="29.4" height="8.5" fill="#5a5a5a"/><text x="265" y="368" font-size="4.6" font-family="Liberation Sans" fill="#aaa">-661,186cm</text><path d="M294.5 363 v5" stroke="#bbb" stroke-width="0.8"/><text x="297" y="368.5" font-size="5" font-family="Liberation Sans" fill="#ccc">Z:</text><rect x="303" y="361.5" width="32" height="8.5" fill="#5a5a5a"/><text x="305" y="368" font-size="4.6" font-family="Liberation Sans" fill="#aaa">-11,964cm</text><path d="M332 363 v5" stroke="#bbb" stroke-width="0.8"/><text x="336.5" y="368.5" font-size="5" font-family="Liberation Sans" fill="#ccc">Grid = 25,40cm</text><path d="M269 373 v10" stroke="#222" stroke-width="1"/><rect x="272" y="373.5" width="8" height="8" fill="#5a5a5a"/><path d="M274 375.5 l4 4" stroke="#ddd" stroke-width="1"/><text x="283" y="379.5" font-size="5" font-family="Liberation Sans" fill="#ccc">Enabled:</text><circle cx="307" cy="378" r="2.8" fill="#2a6a2a"/><circle cx="307" cy="378" r="1.8" fill="#50c050"/><circle cx="316" cy="378" r="3.5" fill="#e8e8e8"/><path d="M330 375 l2.5 2.5 -2.5 2.5 -2.5 -2.5z" fill="none" stroke="#bbb" stroke-width="0.8"/><text x="338" y="379.5" font-size="5" font-family="Liberation Sans" fill="#aaa">Add Time Tag</text><path d="M390 361 v7 M394 361 l-3 3.5 3 3.5 M399 361 l-3 3.5 3 3.5 M403 361 v7" stroke="#ddd" stroke-width="1"/><path d="M411 360 l7 4.5 -7 4.5z" fill="#eee"/><path d="M422 361 l3 3.5 -3 3.5 M426 361 v7 M432 361 l3 3.5 -3 3.5 M436 361 v7" stroke="#ddd" stroke-width="1"/><rect x="399" y="372" width="36" height="7" fill="#5a5a5a"/><rect x="451.5" y="361" width="19.5" height="20" fill="#585858"/><path d="M461 364.5 v13 M454.5 371 h13" stroke="#eee" stroke-width="2.2"/><rect x="473" y="361" width="22" height="8" fill="#585858"/><text x="484" y="367.5" font-size="4.8" font-family="Liberation Sans" fill="#ccc" text-anchor="middle">Auto</text><rect x="473" y="372" width="22" height="8" fill="#585858"/><text x="484" y="378.5" font-size="4.8" font-family="Liberation Sans" fill="#ccc" text-anchor="middle">Set K.</text><rect x="498" y="361" width="54" height="8" fill="#585858"/><text x="500" y="367.5" font-size="4.8" font-family="Liberation Sans" fill="#ccc">Selected</text><rect x="510" y="372" width="42" height="8" fill="#585858"/><text x="531" y="378.5" font-size="4.8" font-family="Liberation Sans" fill="#ccc" text-anchor="middle">Filters...</text><rect x="556" y="362" width="6" height="6" fill="none" stroke="#8cd" stroke-width="0.8"/><rect x="556" y="372" width="6" height="6" fill="none" stroke="#ddd" stroke-width="0.8"/><rect x="566" y="362" width="6" height="6" fill="none" stroke="#8cd" stroke-width="0.8"/><rect x="566" y="372" width="6" height="6" fill="none" stroke="#ddd" stroke-width="0.8"/><rect x="576" y="362" width="6" height="6" fill="none" stroke="#8cd" stroke-width="0.8"/><rect x="576" y="372" width="6" height="6" fill="none" stroke="#ddd" stroke-width="0.8"/><rect x="586" y="362" width="6" height="6" fill="none" stroke="#8cd" stroke-width="0.8"/><rect x="586" y="372" width="6" height="6" fill="none" stroke="#ddd" stroke-width="0.8"/><text x="412" y="354" font-size="6.8" font-family="Liberation Sans" fill="#858585" textLength="162" lengthAdjust="spacingAndGlyphs">Перейдіть до розділу "Настройки", щоб активувати</text><text x="412" y="362.5" font-size="6.8" font-family="Liberation Sans" fill="#707070">Windows.</text><rect x="0" y="383.5" width="594" height="19.5" fill="url(#tbg)"/><circle cx="1" cy="394" r="5" fill="#dfe8c8"/><circle cx="21" cy="393.5" r="6" fill="#0c4a44" stroke="#2a9a80" stroke-width="0.8"/><text x="21" y="396.5" font-size="8" font-style="italic" font-family="Liberation Sans" fill="#ccc" text-anchor="middle">U</text><circle cx="45" cy="393.5" r="6" fill="#d83a2a"/><path d="M45 393.5 L39 396 A6 6 0 0 0 48 399z" fill="#2aa040"/><path d="M45 393.5 L48 399 A6 6 0 0 0 51 393.5z" fill="#f0c020"/><circle cx="45" cy="393.5" r="2.5" fill="#3a70d8" stroke="#fff" stroke-width="0.8"/><rect x="63" y="388" width="12" height="10" fill="#f0c848"/><rect x="66" y="394" width="6" height="4" fill="#3a7ab8"/><rect x="82" y="385" width="23" height="17" fill="#6e6e6e"/><rect x="87" y="387" width="11" height="12" fill="#c8e8e8"/><text x="92.5" y="397" font-size="10" font-weight="bold" font-family="Liberation Sans" fill="#1a8a8a" text-anchor="middle">3</text><circle cx="386" cy="393" r="5" fill="#f0a030"/><circle cx="389" cy="395" r="3.5" fill="#ddd"/><text x="395" y="396.5" font-size="7" font-family="Liberation Sans" fill="#eee">24°C  Mostly sunny</text><text x="462" y="396.5" font-size="6.5" font-family="Liberation Sans" fill="#ddd">^   ▭  ▮  ▬  ≋  ◁)  РУС</text><text x="556" y="391" font-size="5.5" font-family="Liberation Sans" fill="#ddd">10:36</text><text x="550" y="399" font-size="5.5" font-family="Liberation Sans" fill="#ddd">12.10.2023</text><rect x="585" y="389" width="8" height="7" fill="none" stroke="#ddd" stroke-width="0.8"/></svg><div class="a" style="left:991.5px;top:198.5px;width:5px;height:1px;background:#aaa"></div><div class="a" style="left:1013.5px;top:197px;width:5px;height:5px;border:1.3px solid #444"></div><svg style="left:1035px;top:196px" width="7" height="7" viewBox="0 0 7 7"><path d="M1.2 1 L5 3.5 L1.2 6" stroke="#555" stroke-width="1.1" fill="none"/></svg>
<div class="a" style="left:0;top:677px;width:1147px;height:28px;background:#101010"></div>
<div class="a" style="left:0;top:705px;width:1147px;height:5px;background:#171717"></div><div class="a" style="left:0;top:710px;width:1147px;height:12px;background:#141414"></div>
<div class="a" style="left:286px;top:677px;width:40.5px;height:27.5px;background:#2c2c2c"></div>
<div class="a" style="left:286.3px;top:708px;width:40.3px;height:2.3px;background:#4a5a70"></div>
<div class="a" style="left:330.4px;top:708px;width:34.6px;height:2.3px;background:#505860"></div>
<svg style="left:7px;top:684px" width="18" height="18" viewBox="0 0 18 18"><g transform="translate(9,9) scale(0.85)"><path d="M-1.4 -8 h2.8 l0.5 2.3 l1.8 0.8 l2 -1.3 l2 2 l-1.3 2 l0.8 1.8 l2.3 0.5 v2.8 l-2.3 0.5 l-0.8 1.8 l1.3 2 l-2 2 l-2 -1.3 l-1.8 0.8 l-0.5 2.3 h-2.8 l-0.5 -2.3 l-1.8 -0.8 l-2 1.3 l-2 -2 l1.3 -2 l-0.8 -1.8 l-2.3 -0.5 v-2.8 l2.3 -0.5 l0.8 -1.8 l-1.3 -2 l2 -2 l2 1.3 l1.8 -0.8z" fill="#f0f0f0"/><circle r="3" fill="#101010"/></g></svg>
<svg style="left:48px;top:686px" width="19" height="15" viewBox="0 0 19 15"><rect x="0" y="1" width="18.5" height="13" fill="#4aa0e0"/><rect x="0" y="1" width="18.5" height="13" fill="url(#none)"/><rect x="2" y="4" width="6" height="6" fill="#9ad0f0"/><circle cx="5" cy="6" r="2" fill="#e0a040"/><path d="M10 4.5 h6 M10 7 h6 M10 9.5 h6" stroke="#d0ecff" stroke-width="1"/></svg>
<svg style="left:89px;top:684px" width="19" height="18" viewBox="0 0 19 18"><path d="M0.5 2 h6 l2 2 h10 v12 h-18z" fill="#e8b830"/><rect x="0.5" y="5" width="18" height="11" fill="#f8d050"/><rect x="5" y="10" width="9" height="6" fill="#3a8ad0"/><rect x="6.5" y="11.5" width="6" height="3" fill="#f8d050"/></svg>
<svg style="left:131px;top:684px" width="19" height="18" viewBox="0 0 19 18"><rect x="0.5" y="0.5" width="18" height="9" rx="2" fill="#3a78c8"/><g fill="#fff"><rect x="4" y="3" width="2" height="7"/><rect x="8.5" y="5" width="2" height="5"/><rect x="13" y="2.5" width="2" height="7.5"/><rect x="3" y="11" width="2.5" height="6" rx="1"/><rect x="8" y="11" width="2.5" height="6" rx="1"/><rect x="13" y="11" width="2.5" height="6" rx="1"/></g></svg>
<svg style="left:171px;top:683px" width="20" height="20" viewBox="0 0 20 20"><circle cx="10" cy="10" r="9.5" fill="#1a7ad8"/><path d="M2 13 C2 5 10 1 15 4 C19 6 19 10 17 11 C14 12 9 11 8 13 C7 15 10 18 13 18.5 C7 20 2 17 2 13z" fill="#3ac0a0"/><path d="M6 11 C6 8 9 6 12 7 C10 8 8 10 8 13 C8 16 12 18.5 14 18.5 C9 19 6 15 6 11z" fill="#0c4ca8"/></svg>
<svg style="left:213px;top:684px" width="19" height="18" viewBox="0 0 19 18"><rect x="0.5" y="0.5" width="18" height="17" rx="2" fill="#2a88d8"/><path d="M0.5 15 L7 8 L11 12 L14 9 L18.5 14 V17.5 H0.5z" fill="#80d0f8"/><circle cx="13.5" cy="4.5" r="2" fill="#c0ecff"/></svg>
<svg style="left:254px;top:683px" width="20" height="20" viewBox="0 0 20 20"><circle cx="10" cy="10" r="10" fill="#5865f2"/><path d="M5 6.5 C7 5.5 8 5.5 8.5 6 H11.5 C12 5.5 13 5.5 15 6.5 C16 8.5 16.5 11 16.2 13.5 C15 14.5 14 14.8 13.2 15 L12.5 13.8 H7.5 L6.8 15 C6 14.8 5 14.5 3.8 13.5 C3.5 11 4 8.5 5 6.5z" fill="#fff"/><circle cx="8" cy="10.5" r="1.3" fill="#5865f2"/><circle cx="12" cy="10.5" r="1.3" fill="#5865f2"/></svg>
<svg style="left:295.7px;top:683.7px" width="19.3" height="17.6" viewBox="0 0 19.3 17.6"><rect x="0" y="0" width="19.3" height="17.6" rx="2.5" fill="#d42a14"/><path d="M9.6 3.5 C8.5 3.5 9 6 10 8 C11 10 13.5 11.5 15.5 11.2 C16.5 11 15.5 10 13 10.2 C10 10.5 6.5 12.5 5.5 14 C5 15 6 14.8 7 13.5 C8.5 11.5 10.3 6.5 10.3 4.5 C10.3 3.8 10 3.5 9.6 3.5z" fill="none" stroke="#fff" stroke-width="1.2"/></svg>
<svg style="left:337px;top:683.7px" width="20" height="20" viewBox="0 0 20 20"><circle cx="9.7" cy="9.8" r="9.8" fill="#1a6cf8"/><text x="10" y="12" font-size="4.5" font-family="Liberation Sans" fill="#fff" text-anchor="middle">zoom</text></svg>
<svg style="left:893px;top:685px" width="17" height="17" viewBox="0 0 17 17"><circle cx="8.5" cy="8.5" r="8" fill="#f59a1c"/><circle cx="8.5" cy="8.5" r="6" fill="#f8a828"/></svg>
<div class="a" style="left:917px;top:686px;font-size:12px;line-height:14px;color:#eee;white-space:nowrap">32°F&nbsp; Sunny</div>
<svg style="left:999px;top:687px" width="13" height="9" viewBox="0 0 13 9"><path d="M1 7.5 L6.5 2 L12 7.5" fill="none" stroke="#ddd" stroke-width="1.2"/></svg>
<svg style="left:1018px;top:686px" width="16" height="14" viewBox="0 0 16 14"><path d="M1 4.5 h3 l4 -3.5 v12 l-4 -3.5 h-3z" fill="none" stroke="#ddd" stroke-width="1.1"/><path d="M10.5 4.5 q1.5 2.5 0 5 M12.5 3 q3 4 0 8" fill="none" stroke="#999" stroke-width="1"/></svg>
<svg style="left:1040px;top:688px" width="16" height="10" viewBox="0 0 16 10"><rect x="0.5" y="1" width="13" height="8" rx="1" fill="none" stroke="#ddd" stroke-width="1.1"/><rect x="2" y="2.5" width="7" height="5" fill="#ddd"/><rect x="14" y="3.5" width="1.5" height="3" fill="#ddd"/></svg>
<svg style="left:1059px;top:685px" width="16" height="16" viewBox="0 0 16 16"><path d="M2 14 A12 12 0 0 1 14 2 M5 14 A9 9 0 0 1 14 5 M8 14 A6 6 0 0 1 14 8" fill="none" stroke="#aaa" stroke-width="1.1"/><circle cx="13" cy="13" r="1.5" fill="#ddd"/></svg>
<svg style="left:1081px;top:684px" width="17" height="17" viewBox="0 0 17 17"><path d="M2 15 C6 12 4 8 8 8 C12 8 9 13 12 13 C14 13 15 10 13 8 M10 2 L15 7 L8 14 L4 14 L4 10z" fill="none" stroke="#ddd" stroke-width="1.1"/></svg>
<div class="a" style="left:1109px;top:687px;font-size:11px;line-height:13px;color:#eee;white-space:nowrap;transform:scaleX(0.9);transform-origin:0 0">УКР</div>
<div class="a" style="left:1143px;top:680px;font-size:10.5px;line-height:11px;color:#eee">2</div>
<div class="a" style="left:1137px;top:695px;font-size:10.5px;line-height:11px;color:#eee">11,</div>
<div class="a" style="left:3px;top:716px;font-size:11px;line-height:12px;color:#ddd">03</div>
<svg style="left:666px;top:710px" width="26" height="12" viewBox="0 0 26 12"><circle cx="13" cy="13" r="12" fill="#3a3a3a"/><circle cx="13" cy="14" r="8" fill="#e07030"/></svg>

</body></html>
